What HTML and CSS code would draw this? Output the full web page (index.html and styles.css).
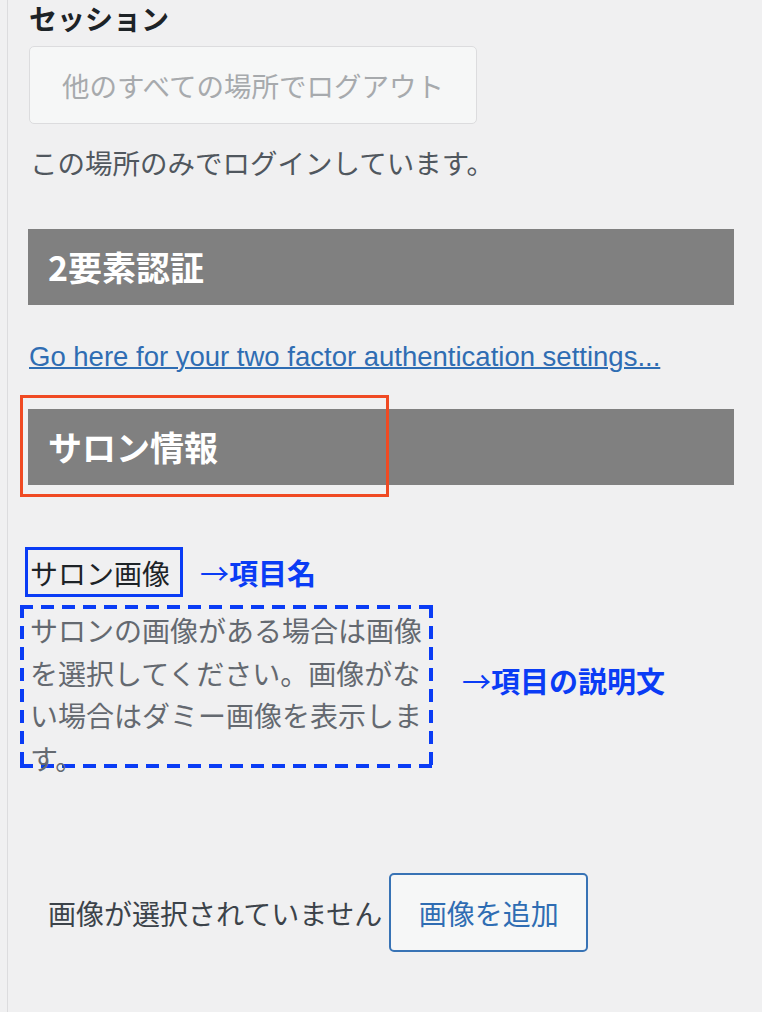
FILE: index.html
```html
<!DOCTYPE html>
<html lang="ja">
<head>
<meta charset="utf-8">
<title>プロフィール</title>
<link rel="stylesheet" href="styles.css">
</head>
<body>
<div class="page">
  <h2 class="session-title">セッション</h2>
  <button class="btn-logout" type="button">他のすべての場所でログアウト</button>
  <p class="note">この場所のみでログインしています。</p>

  <div class="bar"><h3 class="bar-title">2要素認証</h3></div>
  <p class="link-row"><a href="#" class="link">Go here for your two factor authentication settings...</a></p>

  <div class="bar bar-marked">
    <h3 class="bar-title">サロン情報</h3>
    <span class="mark-red"></span>
  </div>

  <div class="label-row">
    <span class="field-label">サロン画像</span>
    <span class="anno"><span class="arrow">→</span>項目名</span>
  </div>

  <div class="desc-row">
    <div class="desc-box">
      <p class="desc">サロンの画像がある場合は画像を選択してください。画像がない場合はダミー画像を表示します。</p>
    </div>
    <span class="anno anno-desc"><span class="arrow">→</span>項目の説明文</span>
  </div>

  <div class="image-row">
    <span class="no-image">画像が選択されていません</span>
    <button class="btn-add" type="button">画像を追加</button>
  </div>
</div>
</body>
</html>
```
FILE: styles.css
```css
html, body {
  margin: 0;
  padding: 0;
  background: #f0f0f1;
}

body {
  font-family: "Noto Sans CJK JP", "Noto Sans", sans-serif;
  color: #3c434a;
}

.page {
  margin-left: 7px;
  border-left: 1px solid #dcdcde;
  min-height: 1012px;
  padding: 0 28px 0 20px;
  box-sizing: border-box;
}

.session-title {
  margin: 0 0 0 1px;
  font-size: 28px;
  line-height: 36px;
  font-weight: 700;
  color: #1d2327;
}

.btn-logout {
  display: block;
  margin: 10px 0 0 1px;
  width: 448px;
  height: 78px;
  padding: 0;
  border: 1px solid #dcdcde;
  border-radius: 5px;
  background: #f6f7f7;
  color: #a7aaad;
  font-family: inherit;
  font-size: 27.5px;
  text-align: center;
}

.note {
  margin: 18px 0 0 2px;
  font-size: 27.5px;
  line-height: 40px;
  color: #50575e;
}

.bar {
  margin-top: 47px;
  height: 76px;
  background: #808080;
  display: flex;
  align-items: center;
  padding-left: 20px;
}

.bar-title {
  margin: 0;
  font-size: 34px;
  line-height: 40px;
  font-weight: 700;
  color: #ffffff;
}

.link-row {
  margin: 32px 0 0 1px;
  font-family: "Liberation Sans", Arial, sans-serif;
  font-size: 27.5px;
  line-height: 40px;
}

.link {
  color: #2f6db3;
  text-decoration: underline;
  text-decoration-thickness: 2px;
}

.bar-marked {
  margin-top: 32px;
  position: relative;
}

.mark-red {
  position: absolute;
  left: -8px;
  top: -14px;
  width: 369px;
  height: 102px;
  box-sizing: border-box;
  border: 3px solid #f04a23;
}

.label-row {
  margin-top: 62px;
  display: flex;
  align-items: center;
}

.field-label {
  margin-left: -3px;
  height: 50px;
  box-sizing: border-box;
  border: 3px solid #0a3cf5;
  padding: 0 10px 0 2px;
  font-size: 28px;
  line-height: 46px;
  color: #1d2327;
}

.anno {
  margin-left: 17px;
  font-size: 29px;
  line-height: 40px;
  font-weight: 700;
  color: #0a3cf5;
}

.arrow {
  font-weight: 400;
}

.desc-row {
  margin-top: 8px;
  display: flex;
  align-items: flex-start;
}

.desc-box {
  margin-left: -8px;
  width: 413px;
  height: 163px;
  box-sizing: border-box;
  padding: 4px 4px 4px 10px;
  background:
    repeating-linear-gradient(90deg, #0a3cf5 0 13px, transparent 13px 21px) left top / 100% 4px no-repeat,
    repeating-linear-gradient(90deg, #0a3cf5 0 13px, transparent 13px 21px) left bottom / 100% 4px no-repeat,
    repeating-linear-gradient(180deg, #0a3cf5 0 13px, transparent 13px 21px) left top / 4px 100% no-repeat,
    repeating-linear-gradient(180deg, #0a3cf5 0 13px, transparent 13px 21px) right top / 4px 100% no-repeat;
}

.desc {
  margin: 0;
  font-size: 28px;
  line-height: 42.5px;
  color: #646970;
}

.anno-desc {
  margin-left: 29px;
  margin-top: 55px;
}

.image-row {
  margin-top: 105px;
  padding-left: 20px;
  display: flex;
  align-items: center;
  gap: 7px;
}

.no-image {
  font-size: 28px;
  line-height: 40px;
  color: #3c434a;
}

.btn-add {
  width: 199px;
  height: 79px;
  padding: 0;
  border: 2px solid #3873b5;
  border-radius: 5px;
  background: #f6f7f7;
  color: #2f6db3;
  font-family: inherit;
  font-size: 28px;
  text-align: center;
}
```
